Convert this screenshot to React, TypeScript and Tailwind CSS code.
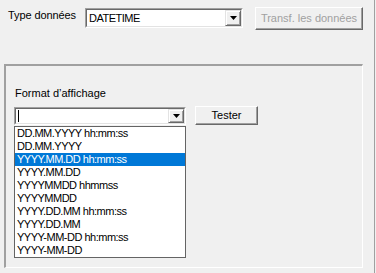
import React from "react";

const items = [
  "DD.MM.YYYY hh:mm:ss",
  "DD.MM.YYYY",
  "YYYY.MM.DD hh:mm:ss",
  "YYYY.MM.DD",
  "YYYYMMDD hhmmss",
  "YYYYMMDD",
  "YYYY.DD.MM hh:mm:ss",
  "YYYY.DD.MM",
  "YYYY-MM-DD hh:mm:ss",
  "YYYY-MM-DD",
];

function Arrow() {
  return (
    <svg width="7" height="4" viewBox="0 0 7 4">
      <path d="M0 0h7L3.5 4z" fill="#000" />
    </svg>
  );
}

function DropBtn() {
  return (
    <div className="w-[16px] h-full flex items-center justify-center bg-[#f0f0f0] border-t border-l border-t-[#e3e3e3] border-l-[#e3e3e3] border-r border-b border-r-[#696969] border-b-[#696969] shadow-[inset_1px_1px_0_#fff,inset_-1px_-1px_0_#a0a0a0]">
      <Arrow />
    </div>
  );
}

export default function App() {
  return (
    <div
      className="w-[376px] h-[273px] bg-[#f0f0f0] flex text-[11px] text-black overflow-hidden"
      style={{ fontFamily: '"Liberation Sans", Arial, sans-serif' }}
    >
      <div className="w-[374px] flex flex-col">
        <div className="flex items-start pt-[7px] pl-[8px]">
          <div className="w-[77px] pt-[2px] leading-[13px] tracking-[-0.1px]">Type données</div>
          <div className="w-[158px] h-[20px] mt-[1px] flex border-t border-l border-t-[#a0a0a0] border-l-[#a0a0a0] border-r border-b border-r-white border-b-white">
            <div className="flex-1 flex bg-white border-t border-l border-t-[#696969] border-l-[#696969] border-r border-b border-r-[#e3e3e3] border-b-[#e3e3e3]">
              <div className="flex-1 pl-[2px] pt-[2px] leading-[13px] tracking-[-0.5px]">DATETIME</div>
              <DropBtn />
            </div>
          </div>
          <div className="ml-[12px] w-[108px] h-[23px] flex items-center justify-center text-[#a0a0a0] border-t border-l border-t-white border-l-white border-r border-b border-r-[#696969] border-b-[#696969] shadow-[inset_-1px_-1px_0_#a0a0a0]">
            Transf. les données
          </div>
        </div>
        <div className="mt-[34px] ml-[4px] w-[359px] h-[204px] border-t-2 border-l-2 border-t-[#a0a0a0] border-l-[#a0a0a0] border-r border-b border-r-white border-b-white flex flex-col">
          <div className="pl-[9px] pt-[21px] leading-[13px]">Format d’affichage</div>
          <div className="flex items-start pl-[8px] mt-[7px]">
            <div className="w-[172px] flex flex-col">
              <div className="h-[18px] flex border-t border-l border-t-[#a0a0a0] border-l-[#a0a0a0] border-r border-b border-r-white border-b-white">
                <div className="flex-1 flex bg-white border-t border-l border-t-[#696969] border-l-[#696969] border-r border-b border-r-[#e3e3e3] border-b-[#e3e3e3]">
                  <div className="flex-1 pl-[2px] flex items-center">
                    <div className="w-px h-[12px] bg-black" />
                  </div>
                  <DropBtn />
                </div>
              </div>
              <div className="mt-[1px] bg-white border border-[#646464] flex flex-col">
                {items.map((t, i) => (
                  <div
                    key={t}
                    className={
                      "h-[13px] leading-[13px] pl-[2px] whitespace-nowrap tracking-[-0.5px] " +
                      (i === 2 ? "bg-[#0078d7] text-white" : "")
                    }
                  >
                    {t}
                  </div>
                ))}
              </div>
            </div>
            <div className="ml-[9px] -mt-[1px] w-[63px] h-[19px] flex items-center justify-center border-t border-l border-t-white border-l-white border-r border-b border-r-[#696969] border-b-[#696969] shadow-[inset_-1px_-1px_0_#a0a0a0]">
              Tester
            </div>
          </div>
        </div>
      </div>
      <div className="w-px h-full bg-[#a0a0a0]" />
      <div className="w-px h-full bg-[#f0f0f0]" />
    </div>
  );
}
